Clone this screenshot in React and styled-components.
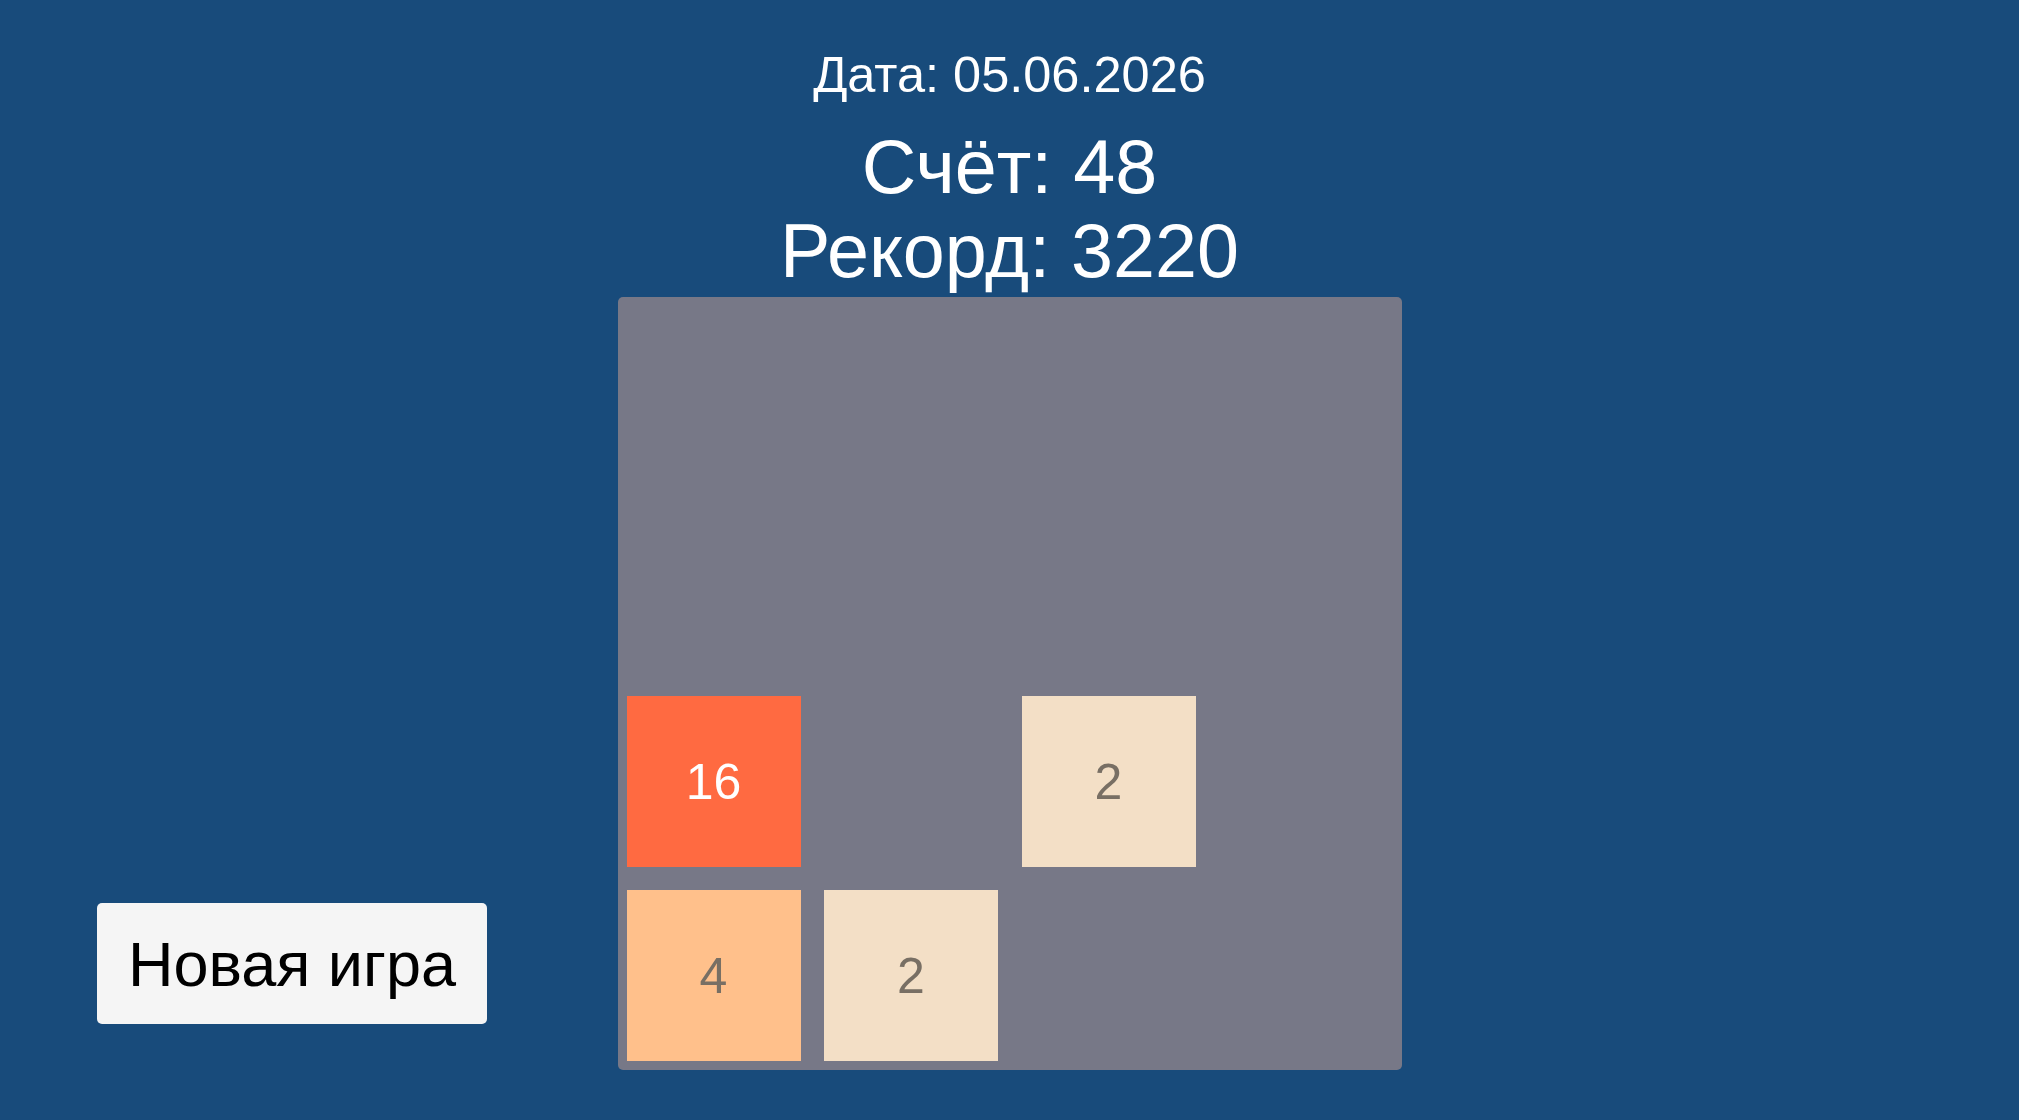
import styled, { createGlobalStyle } from 'styled-components';

// Global page reset
const GlobalStyle = createGlobalStyle`
  html, body {
    margin: 0;
    padding: 0;
    background: #184b7b;
  }
  body {
    font-family: "Liberation Sans", Arial, sans-serif;
  }
`;

const TILE_COLORS = {
  2: { bg: '#f3dfc6', fg: '#786f64' },
  4: { bg: '#ffc08b', fg: '#786f64' },
  8: { bg: '#ff9a5c', fg: '#ffffff' },
  16: { bg: '#ff6a41', fg: '#ffffff' },
};

const Page = styled.div`
  width: 2019px;
  height: 1120px;
  display: grid;
  grid-template-columns: 1fr auto 1fr;
  background: #184b7b;
  overflow: hidden;
`;

const Side = styled.div`
  display: flex;
  align-items: flex-end;
  padding: 0 0 96px 97px;
`;

const Center = styled.div`
  display: flex;
  flex-direction: column;
  align-items: center;
  padding-top: 45px;
`;

const DateLine = styled.div`
  font-size: 50.5px;
  line-height: 60px;
  color: #ffffff;
`;

const ScoreLine = styled.div`
  font-size: 75.5px;
  line-height: 84px;
  color: #ffffff;
  margin-top: ${(p) => (p.$first ? '20px' : '0')};
`;

const Board = styled.div`
  margin-top: 4px;
  width: 784px;
  height: 773px;
  box-sizing: border-box;
  padding: 11px 9px 9px 9px;
  background: #777887;
  border-radius: 5px;
  display: grid;
  grid-template-columns: repeat(4, 174px);
  grid-template-rows: repeat(4, 1fr);
  column-gap: 23.5px;
  row-gap: 23px;
`;

const Cell = styled.div`
  display: flex;
  align-items: center;
  justify-content: center;
  background: ${(p) => (p.$value ? TILE_COLORS[p.$value].bg : 'transparent')};
  color: ${(p) => (p.$value ? TILE_COLORS[p.$value].fg : 'transparent')};
  font-size: 50px;
`;

const NewGameButton = styled.button`
  width: 390px;
  height: 121px;
  border: none;
  border-radius: 5px;
  background: #f5f5f5;
  color: #000000;
  font-family: "Liberation Sans", Arial, sans-serif;
  font-size: 63px;
  padding: 0;
  cursor: pointer;
`;

const grid = [
  [0, 0, 0, 0],
  [0, 0, 0, 0],
  [16, 0, 2, 0],
  [4, 2, 0, 0],
];

function App() {
  return (
    <>
      <GlobalStyle />
      <Page>
        <Side>
          <NewGameButton>Новая игра</NewGameButton>
        </Side>
        <Center>
          <DateLine>Дата: 05.06.2026</DateLine>
          <ScoreLine $first>Счёт: 48</ScoreLine>
          <ScoreLine>Рекорд: 3220</ScoreLine>
          <Board>
            {grid.flat().map((v, i) => (
              <Cell key={i} $value={v}>
                {v || ''}
              </Cell>
            ))}
          </Board>
        </Center>
        <div />
      </Page>
    </>
  );
}

export default App;
